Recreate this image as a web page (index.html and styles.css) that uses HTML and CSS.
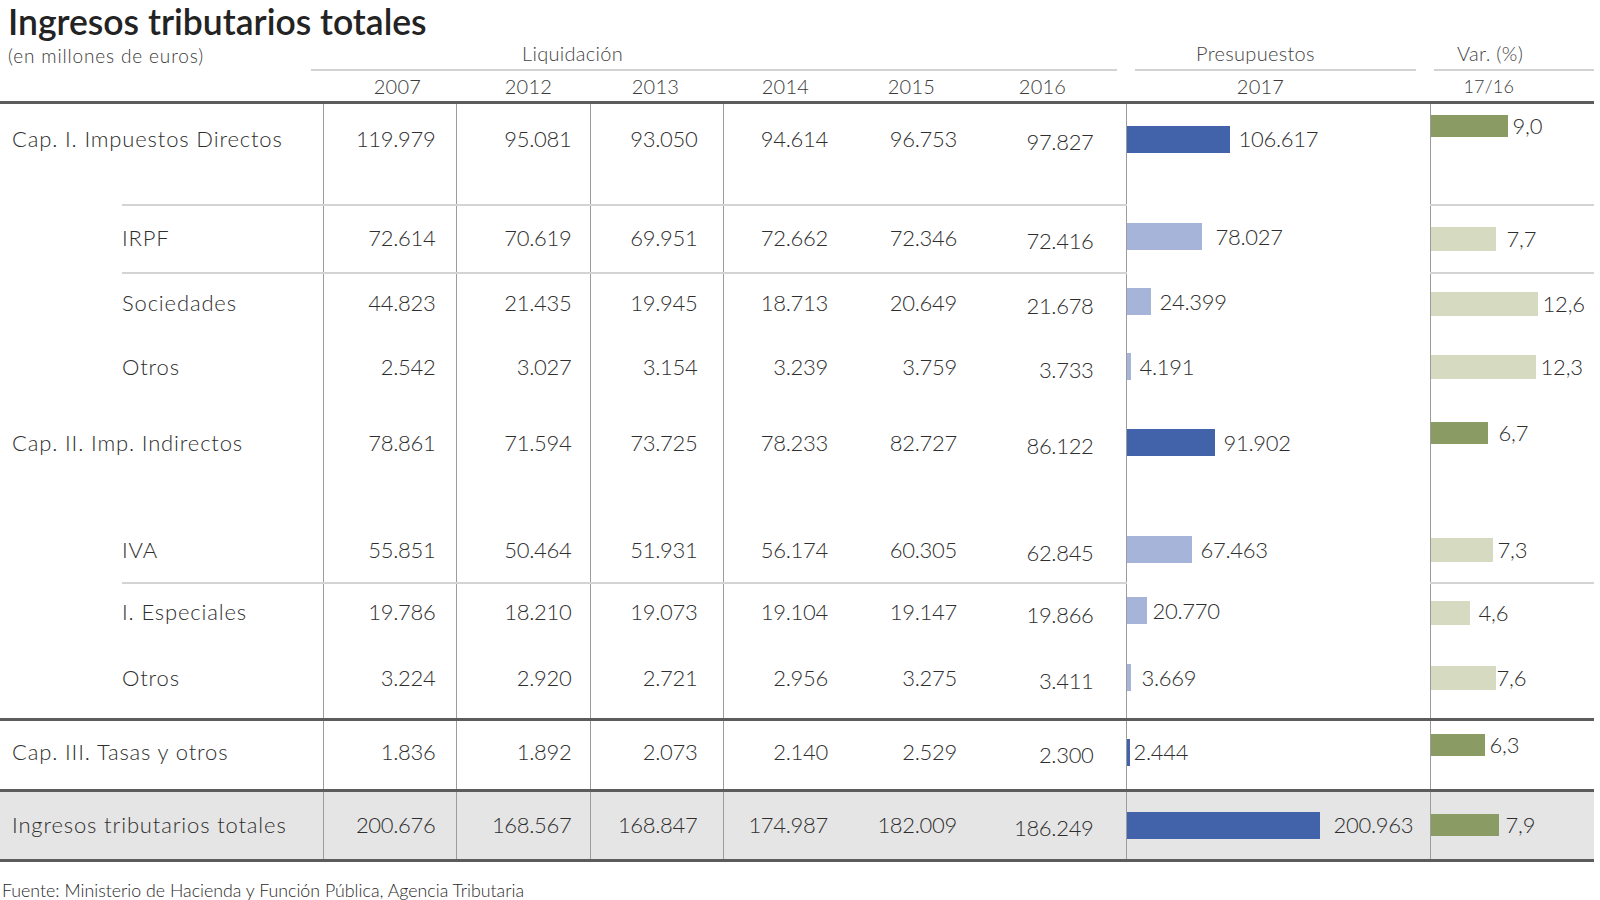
FILE: index.html
```html
<!DOCTYPE html>
<html lang="es">
<head>
<meta charset="utf-8">
<title>Ingresos tributarios totales</title>
<link rel="stylesheet" href="styles.css">
</head>
<body>
<div class="page">
  <h1 class="title">Ingresos tributarios totales</h1>
  <table class="tbl">
    <colgroup>
      <col class="c-ind"><col class="c-lab">
      <col class="c-07"><col class="c-12"><col class="c-13"><col class="c-14"><col class="c-15"><col class="c-16">
      <col class="c-pre"><col class="c-var">
    </colgroup>
    <thead>
      <tr class="r-group">
        <th colspan="2" class="sub">(en millones de euros)</th>
        <th colspan="6" class="grp"><div class="grp-line liq">Liquidación</div></th>
        <th class="grp"><div class="grp-line pre">Presupuestos</div></th>
        <th class="grp"><div class="grp-line var">Var. (%)</div></th>
      </tr>
      <tr class="r-years">
        <th colspan="2"></th>
        <th class="y y07">2007</th>
        <th class="y y12">2012</th>
        <th class="y y13">2013</th>
        <th class="y y14">2014</th>
        <th class="y y15">2015</th>
        <th class="y y16">2016</th>
        <th class="y y17">2017</th>
        <th class="y yv">17/16</th>
      </tr>
    </thead>
    <tbody>
      <tr class="r-cap1">
        <td colspan="2" class="lab main">Cap. I. Impuestos Directos</td>
        <td class="n n07 vl">119.979</td><td class="n n12 vl">95.081</td><td class="n n13 vl">93.050</td><td class="n n14 vl">94.614</td><td class="n n15">96.753</td><td class="n n16">97.827</td>
        <td class="p vl"><div class="pbar"><span class="bar b-dark" style="width:103px"></span><span class="pv">106.617</span></div></td>
        <td class="v vl"><div class="vbar"><span class="gbar g-dark" style="width:77px"></span><span class="vv">9,0</span></div></td>
      </tr>
      <tr class="r-irpf line">
        <td class="ind"></td><td class="lab">IRPF</td>
        <td class="n n07 vl">72.614</td><td class="n n12 vl">70.619</td><td class="n n13 vl">69.951</td><td class="n n14 vl">72.662</td><td class="n n15">72.346</td><td class="n n16">72.416</td>
        <td class="p vl"><div class="pbar pg-14"><span class="bar b-light" style="width:75px"></span><span class="pv">78.027</span></div></td>
        <td class="v vl"><div class="vbar vg-11"><span class="gbar g-light" style="width:65px"></span><span class="vv">7,7</span></div></td>
      </tr>
      <tr class="r-soc line">
        <td class="ind"></td><td class="lab">Sociedades</td>
        <td class="n n07 vl">44.823</td><td class="n n12 vl">21.435</td><td class="n n13 vl">19.945</td><td class="n n14 vl">18.713</td><td class="n n15">20.649</td><td class="n n16">21.678</td>
        <td class="p vl"><div class="pbar"><span class="bar b-light" style="width:24px"></span><span class="pv">24.399</span></div></td>
        <td class="v vl"><div class="vbar"><span class="gbar g-light" style="width:107px"></span><span class="vv">12,6</span></div></td>
      </tr>
      <tr class="r-otr1">
        <td class="ind"></td><td class="lab">Otros</td>
        <td class="n n07 vl">2.542</td><td class="n n12 vl">3.027</td><td class="n n13 vl">3.154</td><td class="n n14 vl">3.239</td><td class="n n15">3.759</td><td class="n n16">3.733</td>
        <td class="p vl"><div class="pbar"><span class="bar b-light" style="width:4px"></span><span class="pv">4.191</span></div></td>
        <td class="v vl"><div class="vbar"><span class="gbar g-light" style="width:105px"></span><span class="vv">12,3</span></div></td>
      </tr>
      <tr class="r-cap2">
        <td colspan="2" class="lab main">Cap. II. Imp. Indirectos</td>
        <td class="n n07 vl">78.861</td><td class="n n12 vl">71.594</td><td class="n n13 vl">73.725</td><td class="n n14 vl">78.233</td><td class="n n15">82.727</td><td class="n n16">86.122</td>
        <td class="p vl"><div class="pbar"><span class="bar b-dark" style="width:88px"></span><span class="pv">91.902</span></div></td>
        <td class="v vl"><div class="vbar vg-11"><span class="gbar g-dark" style="width:57px"></span><span class="vv">6,7</span></div></td>
      </tr>
      <tr class="r-iva">
        <td class="ind"></td><td class="lab">IVA</td>
        <td class="n n07 vl">55.851</td><td class="n n12 vl">50.464</td><td class="n n13 vl">51.931</td><td class="n n14 vl">56.174</td><td class="n n15">60.305</td><td class="n n16">62.845</td>
        <td class="p vl"><div class="pbar"><span class="bar b-light" style="width:65px"></span><span class="pv">67.463</span></div></td>
        <td class="v vl"><div class="vbar"><span class="gbar g-light" style="width:62px"></span><span class="vv">7,3</span></div></td>
      </tr>
      <tr class="r-esp line">
        <td class="ind"></td><td class="lab">I. Especiales</td>
        <td class="n n07 vl">19.786</td><td class="n n12 vl">18.210</td><td class="n n13 vl">19.073</td><td class="n n14 vl">19.104</td><td class="n n15">19.147</td><td class="n n16">19.866</td>
        <td class="p vl"><div class="pbar pg-6"><span class="bar b-light" style="width:20px"></span><span class="pv">20.770</span></div></td>
        <td class="v vl"><div class="vbar vg-9"><span class="gbar g-light" style="width:39px"></span><span class="vv">4,6</span></div></td>
      </tr>
      <tr class="r-otr2">
        <td class="ind"></td><td class="lab">Otros</td>
        <td class="n n07 vl">3.224</td><td class="n n12 vl">2.920</td><td class="n n13 vl">2.721</td><td class="n n14 vl">2.956</td><td class="n n15">3.275</td><td class="n n16">3.411</td>
        <td class="p vl"><div class="pbar pg-11"><span class="bar b-light" style="width:4px"></span><span class="pv">3.669</span></div></td>
        <td class="v vl"><div class="vbar vg-1"><span class="gbar g-light" style="width:65px"></span><span class="vv">7,6</span></div></td>
      </tr>
      <tr class="r-cap3 thick">
        <td colspan="2" class="lab main">Cap. III. Tasas y otros</td>
        <td class="n n07 vl">1.836</td><td class="n n12 vl">1.892</td><td class="n n13 vl">2.073</td><td class="n n14 vl">2.140</td><td class="n n15">2.529</td><td class="n n16">2.300</td>
        <td class="p vl"><div class="pbar pg-4"><span class="bar b-dark" style="width:3px"></span><span class="pv">2.444</span></div></td>
        <td class="v vl"><div class="vbar"><span class="gbar g-dark" style="width:54px"></span><span class="vv">6,3</span></div></td>
      </tr>
      <tr class="r-total thick">
        <td colspan="2" class="lab main">Ingresos tributarios totales</td>
        <td class="n n07 vl">200.676</td><td class="n n12 vl">168.567</td><td class="n n13 vl">168.847</td><td class="n n14 vl">174.987</td><td class="n n15">182.009</td><td class="n n16">186.249</td>
        <td class="p vl"><div class="pbar pg-14"><span class="bar b-dark" style="width:193px"></span><span class="pv">200.963</span></div></td>
        <td class="v vl"><div class="vbar vg-7"><span class="gbar g-dark" style="width:68px"></span><span class="vv">7,9</span></div></td>
      </tr>
    </tbody>
  </table>
  <p class="source">Fuente: Ministerio de Hacienda y Función Pública, Agencia Tributaria</p>
</div>
</body>
</html>
```

FILE: styles.css
```css
html, body {
  margin: 0;
  padding: 0;
  background: #ffffff;
}

.page {
  width: 1600px;
  font-family: "Lato", "Open Sans", "Liberation Sans", sans-serif;
  color: #333333;
}

.title {
  margin: 0;
  padding: 4px 0 0 8px;
  height: 35px;
  font-size: 35.5px;
  line-height: 35px;
  font-weight: 600;
  color: #232323;
  white-space: nowrap;
}

.tbl {
  width: 1594px;
  table-layout: fixed;
  border-collapse: collapse;
  border-spacing: 0;
}

.c-ind { width: 122px; }
.c-lab { width: 201px; }
.c-07 { width: 133px; }
.c-12 { width: 134px; }
.c-13 { width: 133px; }
.c-14 { width: 125px; }
.c-15 { width: 129px; }
.c-16 { width: 149px; }
.c-pre { width: 304px; }
.c-var { width: 164px; }

th, td {
  padding: 0;
  font-weight: 300;
}

/* group header row */
.r-group {
  height: 32px;
}

.r-group th {
  vertical-align: bottom;
}

.sub {
  text-align: left;
  padding-left: 8px;
  padding-bottom: 5px;
  font-size: 19px;
  line-height: 20px;
  letter-spacing: 0.85px;
  color: #3a3a3a;
  white-space: nowrap;
}

.grp {
  text-align: left;
  font-size: 20px;
  line-height: 20px;
  letter-spacing: 0.3px;
  color: #444444;
}

.grp-line {
  padding-bottom: 6px;
  border-bottom: 2px solid #d2d2d2;
  white-space: nowrap;
}

.liq { margin: 0 9px 0 -12px; padding-left: 211px; }
.pre { margin: 0 14px 0 9px; padding-left: 61px; }
.var { margin: 0 0 0 4px; padding-left: 23px; }

/* years row */
.r-years th {
  height: 30px;
  border-bottom: 3px solid #5c5c5c;
  font-size: 20px;
  line-height: 20px;
  letter-spacing: 0.2px;
  color: #3a3a3a;
  vertical-align: middle;
  text-align: right;
}

.y07 { padding-right: 35px; }
.y12 { padding-right: 38px; }
.y13 { padding-right: 44px; }
.y14 { padding-right: 39px; }
.y15 { padding-right: 42px; }
.y16 { padding-right: 60px; }
.y17 { padding-right: 146px; }
.r-years .yv { padding-right: 80px; font-size: 18px; }

/* body rows */
tbody tr {
  --pt: 20px;
  --vr: 0px;
}

tbody td {
  vertical-align: top;
  padding-top: var(--pt);
  font-size: 22px;
  line-height: 24px;
  letter-spacing: -0.3px;
  color: #2e2e2e;
  white-space: nowrap;
}

.r-cap1 { --pt: 23px; --vr: 13px; height: 102px; }
.r-irpf { --pt: 20px; --vr: -1px; height: 68px; }
.r-soc { --pt: 17px; --vr: -1px; height: 64px; }
.r-otr1 { --pt: 18px; height: 64px; }
.r-cap2 { --pt: 30px; --vr: 10px; height: 114px; }
.r-iva { --pt: 23px; height: 68px; }
.r-esp { --pt: 16px; --vr: -1px; height: 63px; }
.r-otr2 { --pt: 20px; height: 74px; }
.r-cap3 { --pt: 19px; --vr: 7px; height: 71px; }
.r-total { --pt: 21px; --vr: 0px; height: 70px; }

.vl { border-left: 1px solid #9c9c9c; }

.line td:not(.ind):not(.p) {
  border-top: 2px solid #d4d4d4;
}

.thick td {
  border-top: 3px solid #5c5c5c;
}

.r-total td {
  background: #e5e5e5;
  border-bottom: 3px solid #5c5c5c;
}

.lab {
  text-align: left;
  letter-spacing: 0.85px;
}

.lab.main { padding-left: 12px; }

.n { text-align: right; }
.n07 { padding-right: 20px; }
.n12 { padding-right: 18px; }
.n13 { padding-right: 25px; }
.n14 { padding-right: 20px; }
.n15 { padding-right: 20px; }
.n16 { padding-right: 32px; padding-top: calc(var(--pt) + 3px); }

/* presupuestos bars */
.pbar {
  display: flex;
  align-items: center;
  gap: 9px;
  height: 24px;
}

.pg-4 { gap: 4px; }
.pg-6 { gap: 6px; }
.pg-11 { gap: 11px; }
.pg-14 { gap: 14px; }

.bar {
  display: block;
  height: 27px;
  flex: none;
}

.b-dark { background: #4263a9; }
.b-light { background: #a7b4d9; }

/* variation bars */
.v { padding-top: calc(var(--pt) - var(--vr)); }

.vbar {
  display: flex;
  align-items: center;
  gap: 5px;
  height: 24px;
}

.vg-1 { gap: 1px; }
.vg-7 { gap: 7px; }
.vg-9 { gap: 9px; }
.vg-11 { gap: 11px; }

.gbar {
  display: block;
  height: 24px;
  flex: none;
}

.g-dark {
  height: 22px;
  background: #8a9b63;
}

.g-light { background: #d5dac0; }

.vv {
  font-size: 22px;
  letter-spacing: -0.2px;
}

.source {
  margin: 18px 0 0 2px;
  font-size: 17.8px;
  line-height: 20px;
  font-weight: 300;
  color: #2a2a2a;
  white-space: nowrap;
}
```
